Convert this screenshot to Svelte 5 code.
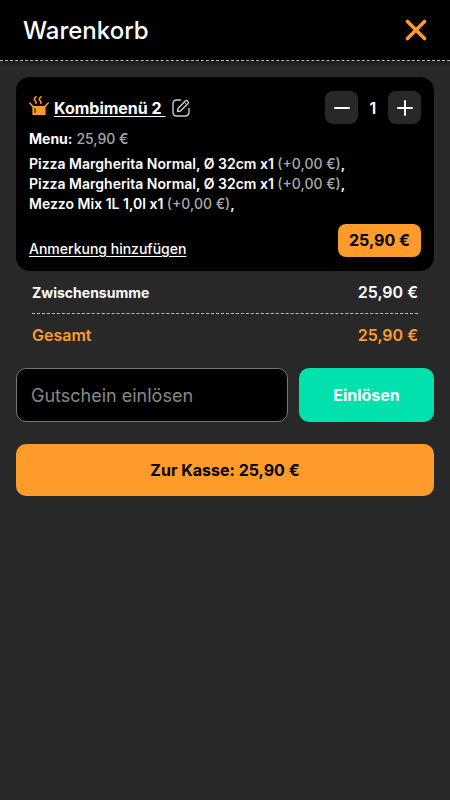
<script>
  let quantity = 1;
  let voucher = '';

  const unitPrice = 25.9;
  const options = [
    { name: 'Pizza Margherita Normal, Ø 32cm x1', extra: 0 },
    { name: 'Pizza Margherita Normal, Ø 32cm x1', extra: 0 },
    { name: 'Mezzo Mix 1L 1,0l x1', extra: 0 },
  ];

  function euro(value) {
    return value.toFixed(2).replace('.', ',') + ' €';
  }

  function decrease() {
    if (quantity > 1) quantity -= 1;
  }

  function increase() {
    quantity += 1;
  }

  $: total = unitPrice * quantity;
</script>

<div class="cart">
  <header>
    <h1>Warenkorb</h1>
    <button class="close" type="button" aria-label="Schließen">
      <svg width="22" height="22" viewBox="0 0 22 22" fill="none" stroke="currentColor" stroke-width="3.600" stroke-linecap="round">
        <path d="M2.500 2.500L19.500 19.500M19.500 2.500L2.500 19.500" />
      </svg>
    </button>
  </header>

  <main>
    <article class="item">
      <div class="item-head">
        <svg class="box" width="20" height="20" viewBox="0 0 20 20" fill="none" stroke="currentColor" stroke-linecap="round" stroke-linejoin="round">
          <path d="M7 0.800C4.800 2.500 5 3.500 6 4.500S7.500 6.200 6.800 7.200M12 0.800C9.800 2.500 10 3.500 11 4.500S12.500 6.200 11.800 7.200" stroke-width="1.500" />
          <path d="M0.800 7L4 10.500M19.200 7L16 10.500" stroke-width="1.500" />
          <path d="M4 10.500H16V18.500H4Z" fill="currentColor" stroke-width="1.200" />
          <path d="M6 12.500V16.500" stroke="#000" stroke-width="1" />
        </svg>
        <a class="name" href="#item">Kombimenü 2&nbsp;</a>
        <button class="edit" type="button" aria-label="Bearbeiten">
          <svg width="18" height="18" viewBox="0 0 18 18" fill="none" stroke="currentColor" stroke-width="1.400" stroke-linecap="round" stroke-linejoin="round">
            <path d="M8.500 1H5Q1 1 1 5V13Q1 17 5 17H13Q17 17 17 13V9.500" />
            <path d="M5.500 12.500L6 9.500L13.500 1.800Q14.500 1 15.600 2Q17 3.200 16 4.400L8.500 12Z" />
            <path d="M12.300 3.200L14.700 5.600" stroke-width="1" />
          </svg>
        </button>
        <div class="stepper">
          <button type="button" aria-label="Weniger" on:click={decrease}>
            <svg width="16" height="16" viewBox="0 0 16 16" stroke="currentColor" stroke-width="2" stroke-linecap="round"><path d="M1 8H15" /></svg>
          </button>
          <span>{quantity}</span>
          <button type="button" aria-label="Mehr" on:click={increase}>
            <svg width="16" height="16" viewBox="0 0 16 16" stroke="currentColor" stroke-width="2" stroke-linecap="round"><path d="M1 8H15M8 1V15" /></svg>
          </button>
        </div>
      </div>

      <p class="base"><b>Menu:</b> <span>{euro(unitPrice)}</span></p>

      <ul>
        {#each options as option}
          <li>{option.name} <span>(+{euro(option.extra)})</span>,</li>
        {/each}
      </ul>

      <div class="item-foot">
        <a href="#note">Anmerkung hinzufügen</a>
        <span class="price">{euro(total)}</span>
      </div>
    </article>

    <dl>
      <div class="row">
        <dt>Zwischensumme</dt>
        <dd>{euro(total)}</dd>
      </div>
      <div class="row total">
        <dt>Gesamt</dt>
        <dd>{euro(total)}</dd>
      </div>
    </dl>

    <form class="voucher" on:submit|preventDefault>
      <input bind:value={voucher} placeholder="Gutschein einlösen" aria-label="Gutschein einlösen" />
      <button type="submit">Einlösen</button>
    </form>

    <button class="checkout" type="button">Zur Kasse: {euro(total)}</button>
  </main>
</div>

<style>
  :global(body) { background: #282828; }
  .cart { color: #fff; font-family: Inter, "Liberation Sans", sans-serif; font-size: 14px; }
  button { font: inherit; color: inherit; border: 0; padding: 0; cursor: pointer; }
  a { color: inherit; text-underline-offset: 2px; }

  header { display: flex; align-items: center; justify-content: space-between; height: 60px; padding: 0 23px; background: #000; border-bottom: 1px dashed #bbb; box-shadow: 0 2px 4px rgba(0, 0, 0, 0.4); }
  h1 { margin: 2px 0 0; font-size: 24px; font-weight: 500; line-height: 30px; }
  .close { display: flex; background: none; color: #ff9b2b; }

  main { padding: 16px; }
  .item { padding: 14px 13px; background: #000; border-radius: 14px; }
  .item-head { display: flex; align-items: center; }
  .box { color: #ff9b2b; margin: 0 5px 4px 0; }
  .name { font-size: 16px; font-weight: 700; }
  .edit { display: flex; margin-left: 7px; background: none; color: #ccc; }
  .stepper { display: flex; align-items: center; margin-left: auto; font-size: 16px; font-weight: 600; }
  .stepper button { display: flex; align-items: center; justify-content: center; width: 33px; height: 33px; background: #282828; border-radius: 8px; }
  .stepper span { width: 30px; text-align: center; }

  .base { margin: 5px 0 6px; line-height: 19px; }
  .base b { font-weight: 700; }
  .base span, li span { color: #aaa; font-weight: 500; }
  ul { list-style: none; margin: 0; padding: 0; font-weight: 600; line-height: 20px; }
  .item-foot { display: flex; align-items: flex-end; justify-content: space-between; margin-top: 10px; font-weight: 500; }
  .price { padding: 0 11px; background: #ff9b2b; border-radius: 8px; color: #000; font-size: 16px; font-weight: 700; line-height: 33px; }

  dl { margin: 0 16px; }
  .row { display: flex; align-items: center; justify-content: space-between; height: 42px; }
  dt { font-weight: 700; }
  dd { margin: 0; font-size: 16px; font-weight: 600; }
  .total { border-top: 1px dashed #bbb; color: #ff9b2b; }
  .total dt { font-size: 16px; font-weight: 600; }
  .total dd { font-weight: 600; }

  .voucher { display: flex; gap: 11px; margin-top: 12px; }
  .voucher input { flex: 1; min-width: 0; height: 54px; box-sizing: border-box; padding: 0 14px; background: #000; border: 1px solid #777; border-radius: 10px; color: #fff; font: inherit; font-size: 18px; }
  .voucher input::placeholder { color: #888; opacity: 1; }
  .voucher button { width: 135px; background: #00e1ae; border-radius: 10px; font-size: 16px; font-weight: 700; }
  .checkout { display: block; width: 100%; height: 52px; margin-top: 22px; background: #ff9b2b; border-radius: 10px; color: #000; font-size: 16px; font-weight: 700; }
</style>
